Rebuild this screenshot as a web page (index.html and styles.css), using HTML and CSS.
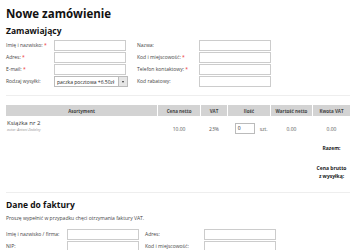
FILE: index.html
```html
<!DOCTYPE html>
<html lang="pl">
<head>
<meta charset="utf-8">
<link rel="stylesheet" href="styles.css">
</head>
<body>
<div class="page">
  <h1 class="title">Nowe zamówienie</h1>
  <h2 class="section">Zamawiający</h2>
  <div class="form form-a">
    <label class="lbl">Imię i nazwisko: <span class="req">*</span></label>
    <div class="inp"></div>
    <label class="lbl">Nazwa:</label>
    <div class="inp"></div>

    <label class="lbl">Adres: <span class="req">*</span></label>
    <div class="inp"></div>
    <label class="lbl">Kod i miejscowość: <span class="req">*</span></label>
    <div class="inp"></div>

    <label class="lbl">E-mail: <span class="req">*</span></label>
    <div class="inp"></div>
    <label class="lbl">Telefon kontaktowy: <span class="req">*</span></label>
    <div class="inp"></div>

    <label class="lbl">Rodzaj wysyłki:</label>
    <div class="sel"><span class="sel-text">paczka pocztowa +6.50zł</span><span class="sel-btn"><span class="arrow"></span></span></div>
    <label class="lbl">Kod rabatowy:</label>
    <div class="inp"></div>
  </div>

  <div class="sep sep-1"></div>

  <table class="cart">
    <thead>
      <tr>
        <th class="c-name">Asortyment</th>
        <th class="c-price">Cena netto</th>
        <th class="c-vat">VAT</th>
        <th class="c-qty">Ilość</th>
        <th class="c-net">Wartość netto</th>
        <th class="c-tax">Kwota VAT</th>
        <th class="c-gross">Wartość brutto</th>
      </tr>
    </thead>
    <tbody>
      <tr class="item">
        <td class="c-name"><div class="prod">Książka nr 2</div><div class="author">autor: Antoni Zadalny</div></td>
        <td class="num">10.00</td>
        <td class="num">23%</td>
        <td class="qty"><span class="qinp">0</span><span class="unit">szt.</span></td>
        <td class="num">0.00</td>
        <td class="num">0.00</td>
        <td class="num">0.00</td>
      </tr>
      <tr class="sum">
        <td colspan="5"></td>
        <td class="sum-lbl">Razem:</td>
        <td></td>
      </tr>
      <tr class="sum sum-2">
        <td colspan="5"></td>
        <td class="sum-lbl">Cena brutto<br>z wysyłką:</td>
        <td></td>
      </tr>
    </tbody>
  </table>

  <div class="sep sep-2"></div>

  <h2 class="section section-b">Dane do faktury</h2>
  <p class="note">Proszę wypełnić w przypadku chęci otrzymania faktury VAT.</p>
  <div class="form form-b">
    <label class="lbl">Imię i nazwisko / firma:</label>
    <div class="inp"></div>
    <label class="lbl">Adres:</label>
    <div class="inp"></div>

    <label class="lbl">NIP:</label>
    <div class="inp"></div>
    <label class="lbl">Kod i miejscowość:</label>
    <div class="inp"></div>
  </div>
</div>
</body>
</html>
```

FILE: styles.css
```css
html, body {
  margin: 0;
  padding: 0;
  background: #fff;
  overflow: hidden;
}
body {
  font-family: "Open Sans", "DejaVu Sans", sans-serif;
  color: #333;
}
.page {
  padding: 6px 0 0 6px;
  width: 440px;
}
.title {
  margin: 0;
  font-size: 11.5px;
  line-height: 16px;
  font-weight: 700;
  color: #111;
}
.section {
  margin: 3px 0 0 0;
  font-size: 8.5px;
  line-height: 12px;
  font-weight: 700;
  color: #111;
}
.form {
  display: grid;
  row-gap: 1px;
  align-items: center;
}
.form-a {
  margin-top: 3px;
  grid-template-columns: 48px 72px 11px 62px 72px;
}
.form-a .lbl:nth-of-type(2n) { grid-column: 4; }
.form-a .lbl:nth-of-type(2n+1) { grid-column: 1; }
.form-b {
  margin-top: 6px;
  grid-template-columns: 61px 72px 6px 59px 72px;
}
.form-b .lbl:nth-of-type(2n) { grid-column: 4; }
.form-b .lbl:nth-of-type(2n+1) { grid-column: 1; }
.lbl {
  font-size: 5px;
  color: #444;
  white-space: nowrap;
  line-height: 11px;
}
.req { color: #e33; }
.inp {
  height: 9px;
  border: 1px solid #ccc;
  background: #fff;
}
.sel {
  width: 74px;
  border: 1px solid #bbb;
  display: flex;
  align-items: center;
  box-sizing: border-box;
  height: 11px;
  font-size: 5px;
  color: #222;
  overflow: hidden;
}
.sel-text { flex: 1; padding-left: 2px; white-space: nowrap; overflow: hidden; }
.sel-btn {
  width: 8px;
  height: 9px;
  background: #e6e6e6;
  border-left: 1px solid #bbb;
  display: flex;
  align-items: center;
  justify-content: center;
}
.arrow {
  width: 0; height: 0;
  border-left: 1.5px solid transparent;
  border-right: 1.5px solid transparent;
  border-top: 2px solid #333;
}
.sep {
  height: 1px;
  background: #eee;
}
.sep-1 { margin-top: 8px; }
.cart {
  margin-top: 9px;
  margin-left: -1px;
  border-collapse: separate;
  border-spacing: 1px 0;
  table-layout: fixed;
  width: 420px;
  font-size: 5px;
}
.cart th {
  background: #d3d3d3;
  color: #444;
  font-weight: 700;
  height: 11px;
  padding: 0;
  font-size: 4.5px;
  text-align: center;
}
.c-name { width: 147px; }
.c-price { width: 41px; }
.c-vat { width: 25px; }
.c-qty { width: 41px; }
.c-net { width: 40px; }
.c-tax { width: 36px; }
.c-gross { width: 70px; }
.cart th.c-gross { text-align: left; padding-left: 1px; }
.cart td { padding: 0; vertical-align: middle; }
.item td { height: 22px; }
.cart td.c-name { text-align: left; padding-left: 1px; vertical-align: top; padding-top: 3px; }
.prod { font-size: 6px; line-height: 8px; color: #333; }
.author { font-size: 3.5px; color: #999; font-style: italic; line-height: 6px; }
.num { text-align: center; color: #555; font-size: 5px; }
.qty { text-align: left; font-size: 5px; color: #555; }
.qinp {
  display: inline-block;
  width: 16px;
  height: 9px;
  border: 1px solid #bbb;
  margin-left: 7px;
  padding-left: 2px;
  box-sizing: content-box;
  line-height: 9px;
  color: #222;
  vertical-align: middle;
}
.unit { margin-left: 5px; vertical-align: middle; }
.sum td { height: 14px; }
.sum-lbl { text-align: center; font-weight: 700; color: #222; font-size: 5px; line-height: 8px; }
.sum-2 td { height: 34px; }
.sep-2 { margin-top: 3px; }
.section-b { margin-top: 6px; }
.note {
  margin: 2px 0 0 0;
  font-size: 5px;
  color: #444;
  line-height: 10px;
}
```
